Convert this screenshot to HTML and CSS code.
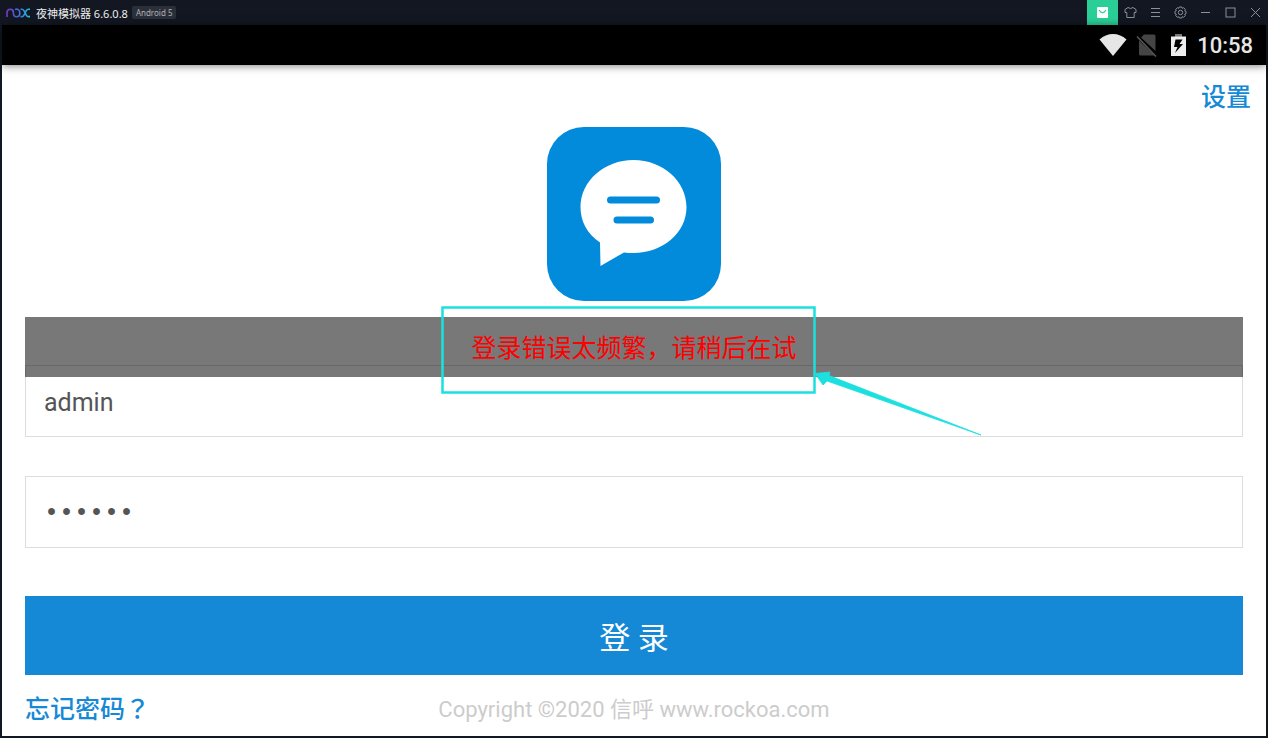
FILE: index.html
```
<!DOCTYPE html>
<html lang="zh-CN">
<head>
  <meta charset="UTF-8">
  <meta name="viewport" content="width=device-width, initial-scale=1">
  <title>夜神模拟器</title>
  <link rel="stylesheet" href="styles.css">
</head>
<body>

  <header class="titlebar">
    <svg class="nox-logo" viewBox="0 0 24 10" role="img" aria-label="nox">
      <defs>
        <linearGradient id="nox" gradientUnits="userSpaceOnUse" x1="0" y1="0" x2="24" y2="0">
          <stop offset="0" stop-color="#7a35c8"/>
          <stop offset="0.5" stop-color="#4a63d8"/>
          <stop offset="1" stop-color="#18c4dc"/>
        </linearGradient>
      </defs>
      <g fill="none" stroke="url(#nox)" stroke-width="1.6">
        <path d="M1 9V4.500a3.200 3.300 0 0 1 6.400 0V5.500a3.200 3.300 0 0 0 6.400 0v-1a3.200 3.300 0 0 0-4.800-2.900"/>
        <path d="M14.500 1.200h1.300q1.300 0 2 1.200l2.600 4.900q.7 1.300 2 1.300h1.600M24 1.200h-1.600q-1.300 0-2 1.200l-2.600 4.900q-.7 1.300-2 1.300h-1.300"/>
      </g>
    </svg>
    <span class="app-name">夜神模拟器 6.6.0.8</span>
    <span class="version">Android 5</span>

    <div class="window-buttons">
      <button class="store" aria-label="应用中心">
        <svg width="11" height="11" viewBox="0 0 11 11">
          <rect width="11" height="11" rx="1" fill="#fff"/>
          <path d="M2 3q3.500 5.500 7 0" fill="none" stroke="#2acf97" stroke-width="1.200"/>
        </svg>
      </button>
      <button aria-label="主题">
        <svg width="13" height="13" viewBox="0 0 13 13">
          <path d="M4 1.500L1 3.500v3h1.800v5h7.400v-5H12v-3L9 1.500Q6.500 3.500 4 1.500z"/>
        </svg>
      </button>
      <button aria-label="菜单">
        <svg width="11" height="11" viewBox="0 0 11 11">
          <path d="M1 1.500h9M1 5.500h9M1 9.500h9"/>
        </svg>
      </button>
      <button aria-label="设置">
        <svg width="13" height="13" viewBox="0 0 13 13">
          <path d="M5.300 1h2.400l.5 1.300 1.400-.6 1.700 1.700-.6 1.400 1.300.5v2.400l-1.300.5.6 1.400-1.700 1.700-1.400-.6-.5 1.300H5.300l-.5-1.300-1.400.6-1.700-1.700.6-1.400L1 7.700V5.300l1.300-.5-.6-1.400 1.700-1.700 1.400.6z"/>
          <circle cx="6.500" cy="6.500" r="2.200"/>
        </svg>
      </button>
      <button aria-label="最小化">
        <svg width="11" height="11" viewBox="0 0 11 11"><path d="M1 5.500h9"/></svg>
      </button>
      <button aria-label="最大化">
        <svg width="11" height="11" viewBox="0 0 11 11"><rect x="1" y="1" width="9" height="9"/></svg>
      </button>
      <button aria-label="关闭">
        <svg width="11" height="11" viewBox="0 0 11 11"><path d="M1 1l9 9M10 1l-9 9"/></svg>
      </button>
    </div>
  </header>

  <div class="screen">
    <div class="statusbar">
      <svg class="wifi" width="28" height="24" viewBox="0 0 28 24">
        <path d="M0.500 6.500Q6.500 1 14 1t13.500 5.500L14 23z" fill="#e6e6e6"/>
      </svg>
      <svg class="no-sim" width="22" height="24" viewBox="0 0 22 24">
        <path d="M8 1.500h10q1.500 0 1.500 1.500V18L5 4.500zM3 7.500L18.500 22.500H4.500Q3 22.500 3 21z" fill="#454545"/>
        <path d="M1 3.500l19 20" stroke="#565656" stroke-width="1.600"/>
      </svg>
      <svg class="battery" width="17" height="24" viewBox="0 0 17 24">
        <path d="M5 1h7v3H5z" fill="#777"/>
        <path d="M1 3.500h15V23H1z" fill="#eee"/>
        <path d="M5.500 6.500h7L9.500 11H13L5 20l2.500-6H4z" fill="#000"/>
      </svg>
      <span class="clock">10:58</span>
    </div>

    <main class="login">
      <div class="top">
        <a href="#">设置</a>
      </div>

      <svg class="logo" viewBox="0 0 174 174" role="img" aria-label="信呼">
        <rect width="174" height="174" rx="37" fill="#038bdb"/>
        <path d="M53 115.500C40 107 33.500 94 33.500 80c0-26 24-47 53-47s53 21 53 47-24 46-53 46q-5 0-9.500-.6L53.500 139z" fill="#fff"/>
        <path d="M63.500 73h46M70 93h33.500" stroke="#038bdb" stroke-width="7" stroke-linecap="round"/>
      </svg>

      <form class="login-form">
        <div class="toast" role="alert">
          登录错误太频繁，请稍后在试
          <svg class="callout" width="546" height="134" viewBox="0 0 546 134">
            <rect x="2.500" y="2.500" width="372" height="85" fill="none" stroke="#1cdfe0" stroke-width="2.500"/>
            <path d="M375 68.500L390 67l-1 3.500L541 130 387 76l-4 4z" fill="#1cdfe0" stroke="#1cdfe0" stroke-width="0.800"/>
          </svg>
        </div>
        <input type="text" value="admin" aria-label="用户名">
        <input type="password" value="123456" aria-label="密码">
        <button class="submit" type="button">登 录</button>
      </form>

      <footer>
        <a href="#">忘记密码<span class="mark" lang="zh-TW">？</span></a>
        <span class="copyright">Copyright ©2020 信呼 www.rockoa.com</span>
      </footer>
    </main>
  </div>

</body>
</html>
```
FILE: styles.css
```
* {
  box-sizing: border-box;
}

body {
  margin: 0;
  min-height: 100vh;
  display: flex;
  flex-direction: column;
  background: #121722;
  font-family: Roboto, "Noto Sans CJK SC", sans-serif;
}

button {
  border: none;
  padding: 0;
  cursor: pointer;
}

a {
  color: #1589d5;
  font-weight: 500;
  text-decoration: none;
}

/* emulator window */
.titlebar {
  display: flex;
  align-items: center;
  height: 25px;
  padding-left: 6px;
  color: #eee;
  font-family: "Noto Sans", "Noto Sans CJK SC", sans-serif;
  font-size: 11px;
}

.nox-logo {
  width: 24px;
  height: 10px;
  margin-right: 6px;
}

.version {
  margin-left: 4px;
  padding: 0 4px;
  border-radius: 2px;
  background: #2b2f39;
  color: #b0b2b6;
  font-size: 8px;
  line-height: 13px;
}

.window-buttons {
  display: flex;
  margin-left: auto;
}

.window-buttons button {
  display: flex;
  align-items: center;
  justify-content: center;
  width: 25px;
  height: 25px;
  background: none;
  fill: none;
  stroke: #8d9097;
}

.window-buttons .store {
  width: 31px;
  background: #2acf97;
  stroke: none;
}

/* android screen */
.screen {
  flex: 1;
  display: flex;
  flex-direction: column;
  margin: 0 2px 2px;
  background: #fff;
}

.statusbar {
  display: flex;
  align-items: center;
  justify-content: flex-end;
  height: 40px;
  padding-right: 13px;
  background: #000;
  box-shadow: 0 1px 8px rgba(0, 0, 0, 0.5);
  color: #e6e6e6;
}

.no-sim {
  margin-left: 9px;
}

.battery {
  margin-left: 12px;
}

.clock {
  margin-left: 10px;
  font-size: 22px;
  font-weight: 500;
}

/* login page */
.login {
  display: flex;
  flex-direction: column;
  padding: 17px 23px 8px;
  font-size: 25px;
  line-height: 32px;
}

.top {
  margin-right: -8px;
  text-align: right;
}

.logo {
  width: 174px;
  height: 174px;
  margin: 13px auto 64px;
}

.login-form {
  position: relative;
  display: flex;
  flex-direction: column;
}

.login-form input {
  width: 100%;
  height: 72px;
  margin-bottom: 39px;
  padding: 3px 18px 0;
  border: 1px solid #ddd;
  border-radius: 0;
  background: #fff;
  color: #555;
  font-family: inherit;
  font-size: 25px;
  outline: none;
}

.login-form input[type="password"] {
  margin-bottom: 48px;
  font-family: "Liberation Mono", monospace;
}

.submit {
  height: 79px;
  background: #1589d5;
  color: #fff;
  font-family: inherit;
  font-size: 31px;
}

.toast {
  position: absolute;
  top: -48px;
  left: 0;
  right: 0;
  height: 60px;
  background: rgba(0, 0, 0, 0.53);
  color: #f00;
  line-height: 64px;
  text-align: center;
}

.callout {
  position: absolute;
  top: -12px;
  left: calc(50% - 194px);
  pointer-events: none;
}

footer {
  display: grid;
  grid-template-columns: 1fr auto 1fr;
  margin-top: 19px;
}

.mark {
  font-family: "Noto Sans CJK TC", sans-serif;
  line-height: 1;
}

.copyright {
  color: #ccc;
  font-size: 22px;
}
```
